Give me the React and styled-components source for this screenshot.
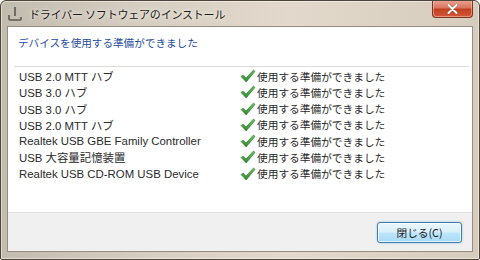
import React from 'react';
import styled, { createGlobalStyle } from 'styled-components';

const Global = createGlobalStyle`
  html, body {
    margin: 0;
    padding: 0;
    background: #ffffff;
  }
  body {
    font-family: "Liberation Sans", "Noto Sans CJK JP", sans-serif;
  }
`;

const Frame = styled.div`
  width: 480px;
  height: 260px;
  box-sizing: border-box;
  border: 1px solid #4e463d;
  border-radius: 6px 6px 2px 2px;
  background: linear-gradient(90deg, #c2bbaf 0%, #d6cec1 30%, #e2d9cc 60%, #d6ccbd 100%);
  box-shadow: inset 0 0 0 1px rgba(255, 250, 240, 0.5);
  padding: 0 6px 7px 6px;
  display: flex;
  flex-direction: column;
  overflow: hidden;
`;

const TitleBar = styled.div`
  height: 25px;
  display: flex;
  align-items: flex-start;
  flex-shrink: 0;
`;

const TitleIcon = styled.div`
  width: 16px;
  height: 16px;
  margin: 5px 6px 0 0;
  display: flex;
`;

const TitleText = styled.div`
  margin-top: 5px;
  font-size: 11px;
  line-height: 16px;
  color: #1b1b1b;
  text-shadow: 0 0 6px #f4efe8, 0 0 3px #f4efe8;
  font-family: "Noto Sans CJK JP", sans-serif;
  letter-spacing: -0.2px;
`;

const CloseButton = styled.div`
  margin-left: auto;
  margin-top: -1px;
  width: 41px;
  height: 18px;
  box-sizing: border-box;
  border: 1px solid #7d3525;
  border-top: none;
  border-radius: 0 0 4px 4px;
  background: linear-gradient(180deg, #eca796 0%, #d9765e 45%, #c2401f 55%, #d3573a 100%);
  box-shadow: inset 0 0 0 1px rgba(255, 220, 200, 0.45);
  display: flex;
  align-items: center;
  justify-content: center;
`;

const Client = styled.div`
  flex: 1;
  display: flex;
  flex-direction: column;
  border: 1px solid #968d80;
  background: #ffffff;
`;

const Content = styled.div`
  flex: 1;
  padding: 8px 0 0 0;
`;

const Heading = styled.div`
  padding-left: 10px;
  font-family: "Noto Sans CJK JP", sans-serif;
  font-size: 10.6px;
  line-height: 16px;
  color: #1f4d9e;
`;

const Separator = styled.div`
  height: 1px;
  background: #dcdcdc;
  margin: 15px 3px 1px 6px;
`;

const List = styled.div`
  display: grid;
  grid-template-columns: 221px auto;
  padding-left: 11px;
`;

const Cell = styled.div`
  height: 16.25px;
  display: flex;
  align-items: center;
  font-size: 11.4px;
  color: #2a2a2a;
  white-space: nowrap;
`;

const Status = styled.span`
  font-family: "Noto Sans CJK JP", sans-serif;
  font-size: 10.7px;
  margin-left: 1px;
  color: #2a2a2a;
`;

const Footer = styled.div`
  height: 39px;
  flex-shrink: 0;
  box-sizing: border-box;
  border-top: 1px solid #dfdfdf;
  background: #f0f0f0;
  display: flex;
  align-items: center;
  justify-content: flex-end;
  padding-right: 10px;
`;

const Button = styled.button`
  width: 85px;
  height: 21px;
  box-sizing: border-box;
  border: 1px solid #3c7fb1;
  border-radius: 3px;
  background: linear-gradient(180deg, #eaf6fd 0%, #d9f0fc 48%, #bee6fd 52%, #a7d9f5 100%);
  box-shadow: inset 0 0 0 1px rgba(255, 255, 255, 0.7), 0 0 2px rgba(60, 150, 210, 0.6);
  font-family: "Noto Sans CJK JP", sans-serif;
  font-size: 10.7px;
  color: #1a1a1a;
  padding: 0;
  margin-top: 1px;
`;

const Check = () => (
  <svg width="16" height="14" viewBox="0 0 16 14">
    <defs>
      <linearGradient id="cg" x1="0" y1="0" x2="0" y2="1">
        <stop offset="0" stopColor="#6fbf5a" />
        <stop offset="1" stopColor="#2f8a32" />
      </linearGradient>
    </defs>
    <path d="M1 7.5 L3.2 6 L6 9 L13.5 1 L15 2.4 L6.2 13 Z" fill="url(#cg)" stroke="#2c7a2e" strokeWidth="0.6" strokeLinejoin="round" />
  </svg>
);

const devices = [
  'USB 2.0 MTT ハブ',
  'USB 3.0 ハブ',
  'USB 3.0 ハブ',
  'USB 2.0 MTT ハブ',
  'Realtek USB GBE Family Controller',
  'USB 大容量記憶装置',
  'Realtek USB CD-ROM USB Device',
];

export default function App() {
  return (
    <>
      <Global />
      <Frame>
        <TitleBar>
          <TitleIcon>
            <svg width="16" height="16" viewBox="0 0 16 16">
              <path d="M7 1 L9 1 L9 10 L7 10 Z" fill="#6e6a64" />
              <path d="M2 9 L2 13 Q2 14 3 14 L13 14 Q14 14 14 13 L14 11" fill="none" stroke="#5c5852" strokeWidth="1.6" />
            </svg>
          </TitleIcon>
          <TitleText>ドライバー ソフトウェアのインストール</TitleText>
          <CloseButton>
            <svg width="11" height="10" viewBox="0 0 11 10">
              <path d="M1.5 1 L9.5 9 M9.5 1 L1.5 9" stroke="#7a2a1a" strokeWidth="3" strokeLinecap="round" opacity="0.5" />
              <path d="M1.5 1 L9.5 9 M9.5 1 L1.5 9" stroke="#ffffff" strokeWidth="2" strokeLinecap="round" />
            </svg>
          </CloseButton>
        </TitleBar>
        <Client>
          <Content>
            <Heading>デバイスを使用する準備ができました</Heading>
            <Separator />
            <List>
              {devices.map((d, i) => (
                <React.Fragment key={i}>
                  <Cell>{d}</Cell>
                  <Cell>
                    <Check />
                    <Status>使用する準備ができました</Status>
                  </Cell>
                </React.Fragment>
              ))}
            </List>
          </Content>
          <Footer>
            <Button>閉じる(C)</Button>
          </Footer>
        </Client>
      </Frame>
    </>
  );
}
